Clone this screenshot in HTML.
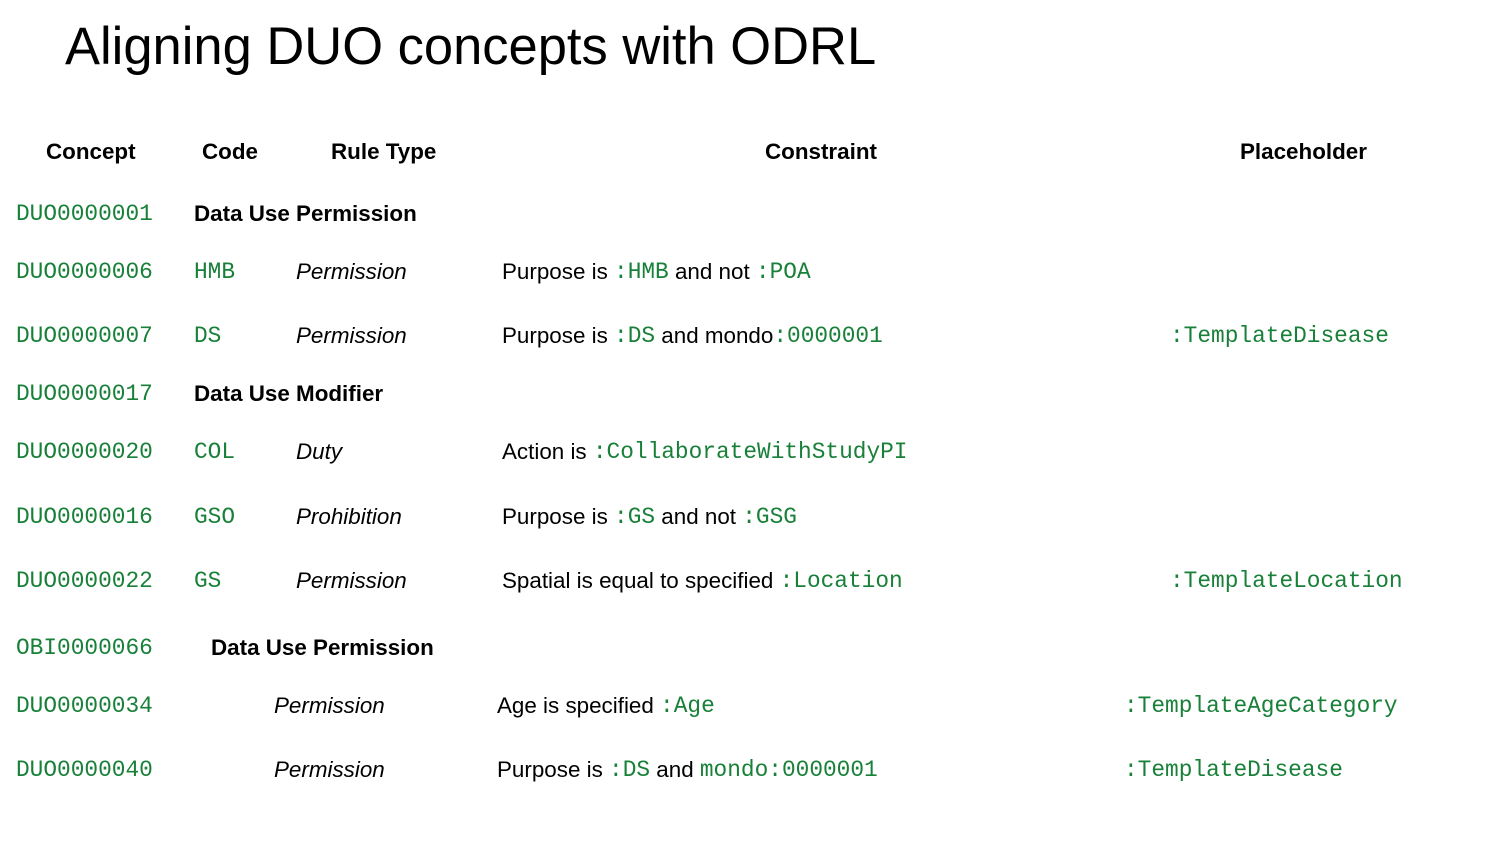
<!DOCTYPE html>
<html><head><meta charset="utf-8"><style>
body{margin:0;width:1500px;height:844px;background:#fff;position:relative;overflow:hidden;font-family:"Liberation Sans",Arial,sans-serif;color:#000}
.t{position:absolute;white-space:nowrap;font-size:22.4px;line-height:26px}
.m{font-family:"Liberation Mono","DejaVu Sans Mono",monospace;color:#188038;font-size:22.8px}
.t .m{vertical-align:1px}
.b{font-weight:bold}
.i{font-style:italic}
</style></head><body>
<div class="t" style="left:65px;top:15px;font-size:52.5px;line-height:64px">Aligning DUO concepts with ODRL</div>

<div class="t b" style="left:46px;top:139px">Concept</div>
<div class="t b" style="left:202px;top:139px">Code</div>
<div class="t b" style="left:331px;top:139px">Rule Type</div>
<div class="t b" style="left:765px;top:139px">Constraint</div>
<div class="t b" style="left:1240px;top:139px">Placeholder</div>

<div class="t m" style="left:16px;top:201px">DUO0000001</div>
<div class="t b" style="left:194px;top:201px">Data Use Permission</div>

<div class="t m" style="left:16px;top:259px">DUO0000006</div>
<div class="t m" style="left:194px;top:259px">HMB</div>
<div class="t i" style="left:296px;top:259px">Permission</div>
<div class="t" style="left:502px;top:259px">Purpose is <span class="m">:HMB</span> and not <span class="m">:POA</span></div>

<div class="t m" style="left:16px;top:323px">DUO0000007</div>
<div class="t m" style="left:194px;top:323px">DS</div>
<div class="t i" style="left:296px;top:323px">Permission</div>
<div class="t" style="left:502px;top:323px">Purpose is <span class="m">:DS</span> and mondo<span class="m">:0000001</span></div>
<div class="t m" style="left:1170px;top:323px">:TemplateDisease</div>

<div class="t m" style="left:16px;top:381px">DUO0000017</div>
<div class="t b" style="left:194px;top:381px">Data Use Modifier</div>

<div class="t m" style="left:16px;top:439px">DUO0000020</div>
<div class="t m" style="left:194px;top:439px">COL</div>
<div class="t i" style="left:296px;top:439px">Duty</div>
<div class="t" style="left:502px;top:439px">Action is <span class="m">:CollaborateWithStudyPI</span></div>

<div class="t m" style="left:16px;top:504px">DUO0000016</div>
<div class="t m" style="left:194px;top:504px">GSO</div>
<div class="t i" style="left:296px;top:504px">Prohibition</div>
<div class="t" style="left:502px;top:504px">Purpose is <span class="m">:GS</span> and not <span class="m">:GSG</span></div>

<div class="t m" style="left:16px;top:568px">DUO0000022</div>
<div class="t m" style="left:194px;top:568px">GS</div>
<div class="t i" style="left:296px;top:568px">Permission</div>
<div class="t" style="left:502px;top:568px">Spatial is equal to specified <span class="m">:Location</span></div>
<div class="t m" style="left:1170px;top:568px">:TemplateLocation</div>

<div class="t m" style="left:16px;top:635px">OBI0000066</div>
<div class="t b" style="left:211px;top:635px">Data Use Permission</div>

<div class="t m" style="left:16px;top:693px">DUO0000034</div>
<div class="t i" style="left:274px;top:693px">Permission</div>
<div class="t" style="left:497px;top:693px">Age is specified <span class="m">:Age</span></div>
<div class="t m" style="left:1124px;top:693px">:TemplateAgeCategory</div>

<div class="t m" style="left:16px;top:757px">DUO0000040</div>
<div class="t i" style="left:274px;top:757px">Permission</div>
<div class="t" style="left:497px;top:757px">Purpose is <span class="m">:DS</span> and <span class="m">mondo:0000001</span></div>
<div class="t m" style="left:1124px;top:757px">:TemplateDisease</div>
</body></html>
